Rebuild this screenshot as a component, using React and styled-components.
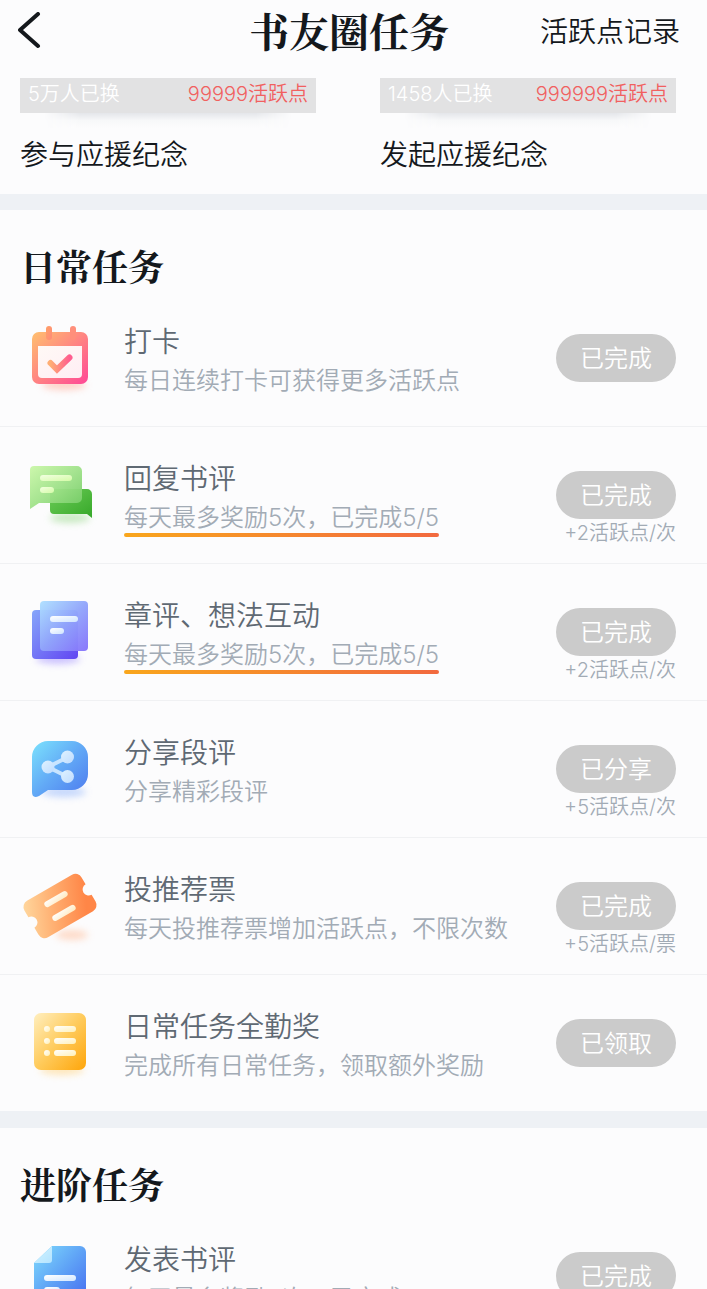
import React from 'react'
import styled, { createGlobalStyle } from 'styled-components';

const GlobalStyle = createGlobalStyle`
*, *::before, *::after {
  box-sizing: border-box;
}
body {
  margin: 0;
  background: #fcfcfd;
  color: #14181c;
  font-family: Inter, "Noto Sans CJK SC", sans-serif;
  font-weight: 350;
}
h1, h2, h3, p, ul {
  margin: 0;
  padding: 0;
}
`

const Screen = styled.div`
height: 100vh;
overflow: hidden;
`

const Header = styled.header`
display: grid;
grid-template-columns: 1fr auto 1fr;
align-items: center;
height: 64px;
margin-bottom: 14px;
padding: 0 27px 0 18px;
`

const BackButton = styled.button`
justify-self: start;
width: 24px;
height: 40px;
padding: 0;
border: 0;
background: none;
cursor: pointer;

svg {
  display: block;
}
`

const PageTitle = styled.h1`
padding-bottom: 4px;
font-family: "Noto Serif CJK SC", "Source Han Serif SC", "Noto Serif SC", "Liberation Serif", "Noto Sans CJK SC", serif;
font-size: 40px;
line-height: 48px;
font-weight: 700;
`

const RecordLink = styled.a`
justify-self: end;
font-size: 28px;
line-height: 40px;
color: inherit;
text-decoration: none;
white-space: nowrap;
`

const Rewards = styled.section`
display: grid;
grid-template-columns: 1fr 1fr;
gap: 64px;
padding: 0 31px 19px 20px;
`

const RewardBar = styled.div`
display: flex;
justify-content: space-between;
height: 35px;
padding: 0 8px;
background: #e2e2e3;
color: #fff;
font-size: 20px;
line-height: 33px;

strong {
  color: #f1605f;
  font-weight: inherit;
}
`

const RewardShade = styled.div`
height: 15px;
margin: 0 24px;
background: linear-gradient(#e4e6ea, #f7f8f9 50%, #fcfcfd);
mask-image: linear-gradient(90deg, transparent, #000 36px, #000 calc(100% - 36px), transparent);
`

const RewardName = styled.h3`
margin-top: 7px;
font-size: 28px;
line-height: 40px;
font-weight: inherit;
`

const Section = styled.section`
padding-top: 32px;
border-top: 16px solid #eef1f5;
`

const SectionTitle = styled.h2`
padding: 0 20px;
font-family: "Noto Serif CJK SC", "Source Han Serif SC", "Noto Serif SC", "Liberation Serif", "Noto Sans CJK SC", serif;
font-size: 36px;
line-height: 48px;
font-weight: 700;
`

const TaskList = styled.ul`
list-style: none;
`

const Row = styled.li`
display: flex;
align-items: flex-start;
height: 137px;
padding: 32px 31px 0 20px;
border-bottom: 1px solid #f0f1f3;

&:last-child {
  border-color: #eef1f5;
}
`

const IconBox = styled.div`
flex: none;
width: 80px;
height: 80px;
margin-right: 24px;

svg {
  display: block;
  overflow: visible;
}
`

const TaskText = styled.div`
flex: 1;
min-width: 0;
`

const TaskName = styled.h3`
font-size: 28px;
line-height: 40px;
font-weight: inherit;
color: #5f6973;
`

const TaskInfo = styled.p`
position: relative;
width: fit-content;
font-size: 24px;
line-height: 38px;
color: #a2abb5;
white-space: nowrap;

&::after {
  content: '';
  display: ${props => props.$marked ? 'block' : 'none'};
  position: absolute;
  left: 0;
  right: 0;
  bottom: 0;
  height: 4px;
  border-radius: 2px;
  background: linear-gradient(90deg, #f9a61c, #f2693f);
}
`

const TaskSide = styled.div`
display: flex;
flex-direction: column;
align-items: flex-end;
padding-top: 12px;
`

const StateButton = styled.button`
width: 120px;
height: 48px;
padding: 2px 0 0;
border: 0;
border-radius: 24px;
background: #cbcbcb;
color: #fff;
font: inherit;
font-size: 24px;
line-height: 46px;
`

const Bonus = styled.span`
font-size: 20px;
line-height: 28px;
color: #a2abb5;
white-space: nowrap;
`

const Gradient = ({ id, from, mid, to }) => (
  <linearGradient id={id} x1="0" y1="0" x2="1" y2="1">
    <stop offset="0" stopColor={from} />
    {mid && <stop offset="0.5" stopColor={mid} />}
    <stop offset="1" stopColor={to} />
  </linearGradient>
)

const Glow = ({ id, color, cx = 44, cy = 66, rx = 22, ry = 5 }) => (
  <>
    <filter id={id} x="-50%" y="-150%" width="200%" height="400%">
      <feGaussianBlur stdDeviation="3.5" />
    </filter>
    <ellipse cx={cx} cy={cy} rx={rx} ry={ry} fill={color} opacity="0.6" filter={`url(#${id})`} />
  </>
)

const CalendarIcon = () => (
  <svg width="80" height="80" viewBox="0 0 80 80" aria-hidden="true">
    <Gradient id="calBody" from="#ffc06e" mid="#ff8482" to="#ff4797" />
    <Gradient id="calRing" from="#ffa068" to="#ff8a78" />
    <Gradient id="calPaper" from="#fff9f6" to="#ffeef4" />
    <linearGradient id="calTick" x1="0" y1="0" x2="1" y2="0">
      <stop offset="0" stopColor="#ffae74" />
      <stop offset="1" stopColor="#ff5d8f" />
    </linearGradient>
    <Glow id="calGlow" color="#ffb3a0" cy={63} />
    <rect x="12" y="10" width="56" height="52" rx="7" fill="url(#calBody)" />
    <path d="M18 24h44v28a4 4 0 0 1-4 4H22a4 4 0 0 1-4-4Z" fill="url(#calPaper)" />
    <rect x="26" y="4" width="6" height="14" rx="3" fill="url(#calRing)" />
    <rect x="50" y="4" width="6" height="14" rx="3" fill="#ff8f7b" />
    <path d="M30.500 41l6.500 6.500L49.500 35.500" fill="none" stroke="url(#calTick)" strokeWidth="6" strokeLinecap="round" />
  </svg>
)

const ReplyIcon = () => (
  <svg width="80" height="80" viewBox="0 0 80 80" aria-hidden="true">
    <Gradient id="repFront" from="#caf7a8" mid="#a0e28a" to="#74cb66" />
    <Gradient id="repBack" from="#6dcc58" to="#36a829" />
    <Gradient id="repLine" from="#f2ffe0" to="#d5fba8" />
    <Glow id="repGlow" color="#a4dd98" cx={50} cy={59} rx={20} />
    <path d="M30 31q0-1 1-1h36a5 5 0 0 1 5 5v24l-5-4H34a4 4 0 0 1-4-4Z" fill="url(#repBack)" />
    <path d="M14 7h43a5 5 0 0 1 5 5v27a5 5 0 0 1-5 5H19l-9 6V11a4 4 0 0 1 4-4Z" fill="url(#repFront)" fillOpacity="0.95" />
    <rect x="20" y="16" width="32" height="6" rx="3" fill="url(#repLine)" />
    <rect x="20" y="28" width="14" height="6" rx="3" fill="url(#repLine)" />
  </svg>
)

const ChapterIcon = () => (
  <svg width="80" height="80" viewBox="0 0 80 80" aria-hidden="true">
    <Gradient id="chaFront" from="#aee0ff" mid="#91a5fb" to="#8571fb" />
    <Gradient id="chaBack" from="#86a6fa" to="#6145f2" />
    <Gradient id="chaLine" from="#ffffff" to="#cfe4ff" />
    <Glow id="chaGlow" color="#a898ff" cx={38} cy={63} />
    <rect x="12" y="14" width="46" height="49" rx="4" fill="url(#chaBack)" />
    <rect x="20" y="5" width="48" height="50" rx="4" fill="url(#chaFront)" fillOpacity="0.96" />
    <rect x="30" y="20" width="28" height="6" rx="3" fill="url(#chaLine)" />
    <rect x="30" y="32" width="14" height="6" rx="3" fill="url(#chaLine)" />
  </svg>
)

const ShareIcon = () => (
  <svg width="80" height="80" viewBox="0 0 80 80" aria-hidden="true">
    <Gradient id="shaBody" from="#7be2fd" mid="#62a9f6" to="#4c78ee" />
    <Gradient id="shaNode" from="#dff2ff" to="#bfdcff" />
    <Glow id="shaGlow" color="#9cbcfb" cx={44} cy={59} />
    <path d="M28 8h24a16 16 0 0 1 16 16v17a16 16 0 0 1-16 16H28l-9 6q-7 3-7-4V24A16 16 0 0 1 28 8Z" fill="url(#shaBody)" />
    <path d="M48 24L28 34l20 10" fill="none" stroke="#c9e5ff" strokeWidth="4" />
    <circle cx="28" cy="34" r="6.500" fill="url(#shaNode)" />
    <circle cx="47.500" cy="24" r="6.500" fill="url(#shaNode)" />
    <circle cx="47.500" cy="43.500" r="6.500" fill="url(#shaNode)" />
  </svg>
)

const TicketIcon = () => (
  <svg width="80" height="80" viewBox="0 0 80 80" aria-hidden="true">
    <linearGradient id="ticBody" x1="0" y1="0" x2="1" y2="0.3">
      <stop offset="0" stopColor="#ffd9a0" />
      <stop offset="0.5" stopColor="#ffae70" />
      <stop offset="1" stopColor="#ff8647" />
    </linearGradient>
    <Gradient id="ticLine" from="#ffffff" to="#ffeac0" />
    <Glow id="ticGlow" color="#ffc4a4" cx={52} cy={65} rx={16} />
    <g transform="rotate(-30 40 36)">
      <path d="M14 15h52a7 7 0 0 1 7 7v8a6 6 0 0 0 0 12v8a7 7 0 0 1-7 7H14a7 7 0 0 1-7-7v-8a6 6 0 0 0 0-12v-8a7 7 0 0 1 7-7Z" fill="url(#ticBody)" />
      <rect x="27" y="25" width="26" height="6" rx="3" fill="url(#ticLine)" />
      <rect x="27" y="41" width="26" height="6" rx="3" fill="url(#ticLine)" />
    </g>
  </svg>
)

const ListIcon = () => (
  <svg width="80" height="80" viewBox="0 0 80 80" aria-hidden="true">
    <Gradient id="lisBody" from="#ffefc0" mid="#ffcb5c" to="#fea50a" />
    <Gradient id="lisLine" from="#ffffff" to="#fff0b8" />
    <Glow id="lisGlow" color="#ffd78a" cx={42} cy={63} />
    <rect x="14" y="6" width="52" height="57" rx="7" fill="url(#lisBody)" />
    {[22, 34, 46].map(y => (
      <g key={y} fill="url(#lisLine)">
        <circle cx="27" cy={y} r="3" />
        <rect x="34" y={y - 3} width="22" height="6" rx="3" />
      </g>
    ))}
  </svg>
)

const DocIcon = () => (
  <svg width="80" height="80" viewBox="0 0 80 80" aria-hidden="true">
    <Gradient id="docBody" from="#7fdcfd" mid="#5fa3f6" to="#456af0" />
    <Gradient id="docFold" from="#d3f3ff" to="#b4e4ff" />
    <Gradient id="docLine" from="#ffffff" to="#d3e7ff" />
    <path d="M32 6h28a6 6 0 0 1 6 6v44a6 6 0 0 1-6 6H20a6 6 0 0 1-6-6V23Z" fill="url(#docBody)" />
    <path d="M32 6v14a3 3 0 0 1-3 3H14Z" fill="url(#docFold)" />
    <rect x="24" y="35" width="32" height="6" rx="3" fill="url(#docLine)" />
    <rect x="24" y="47" width="16" height="6" rx="3" fill="url(#docLine)" />
  </svg>
)

const Reward = ({ count, price, name }) => (
  <article>
    <RewardBar>
      <span>{count}</span>
      <strong>{price}</strong>
    </RewardBar>
    <RewardShade />
    <RewardName>{name}</RewardName>
  </article>
)

const Task = ({ icon, name, info, state, bonus, marked }) => (
  <Row>
    <IconBox>{icon}</IconBox>
    <TaskText>
      <TaskName>{name}</TaskName>
      <TaskInfo $marked={marked}>{info}</TaskInfo>
    </TaskText>
    <TaskSide>
      <StateButton type="button">{state}</StateButton>
      {bonus && <Bonus>{bonus}</Bonus>}
    </TaskSide>
  </Row>
)

const App = () => {
  return (
    <Screen>
      <GlobalStyle />
      <Header>
        <BackButton type="button" aria-label="返回">
          <svg width="24" height="40" viewBox="0 0 24 40">
            <path d="M20 2L2 18l18 16" fill="none" stroke="#14181c" strokeWidth="4" strokeLinecap="round" strokeLinejoin="round" />
          </svg>
        </BackButton>
        <PageTitle>书友圈任务</PageTitle>
        <RecordLink href="#record">活跃点记录</RecordLink>
      </Header>
      <main>
        <Rewards>
          <Reward count="5万人已换" price="99999活跃点" name="参与应援纪念" />
          <Reward count="1458人已换" price="999999活跃点" name="发起应援纪念" />
        </Rewards>
        <Section>
          <SectionTitle>日常任务</SectionTitle>
          <TaskList>
            <Task icon={<CalendarIcon />} name="打卡" info="每日连续打卡可获得更多活跃点" state="已完成" />
            <Task icon={<ReplyIcon />} name="回复书评" info="每天最多奖励5次，已完成5/5" state="已完成" bonus="+2活跃点/次" marked />
            <Task icon={<ChapterIcon />} name="章评、想法互动" info="每天最多奖励5次，已完成5/5" state="已完成" bonus="+2活跃点/次" marked />
            <Task icon={<ShareIcon />} name="分享段评" info="分享精彩段评" state="已分享" bonus="+5活跃点/次" />
            <Task icon={<TicketIcon />} name="投推荐票" info="每天投推荐票增加活跃点，不限次数" state="已完成" bonus="+5活跃点/票" />
            <Task icon={<ListIcon />} name="日常任务全勤奖" info="完成所有日常任务，领取额外奖励" state="已领取" />
          </TaskList>
        </Section>
        <Section>
          <SectionTitle>进阶任务</SectionTitle>
          <TaskList>
            <Task icon={<DocIcon />} name="发表书评" info="每天最多奖励5次，已完成5/5" state="已完成" />
          </TaskList>
        </Section>
      </main>
    </Screen>
  )
}

export default App
